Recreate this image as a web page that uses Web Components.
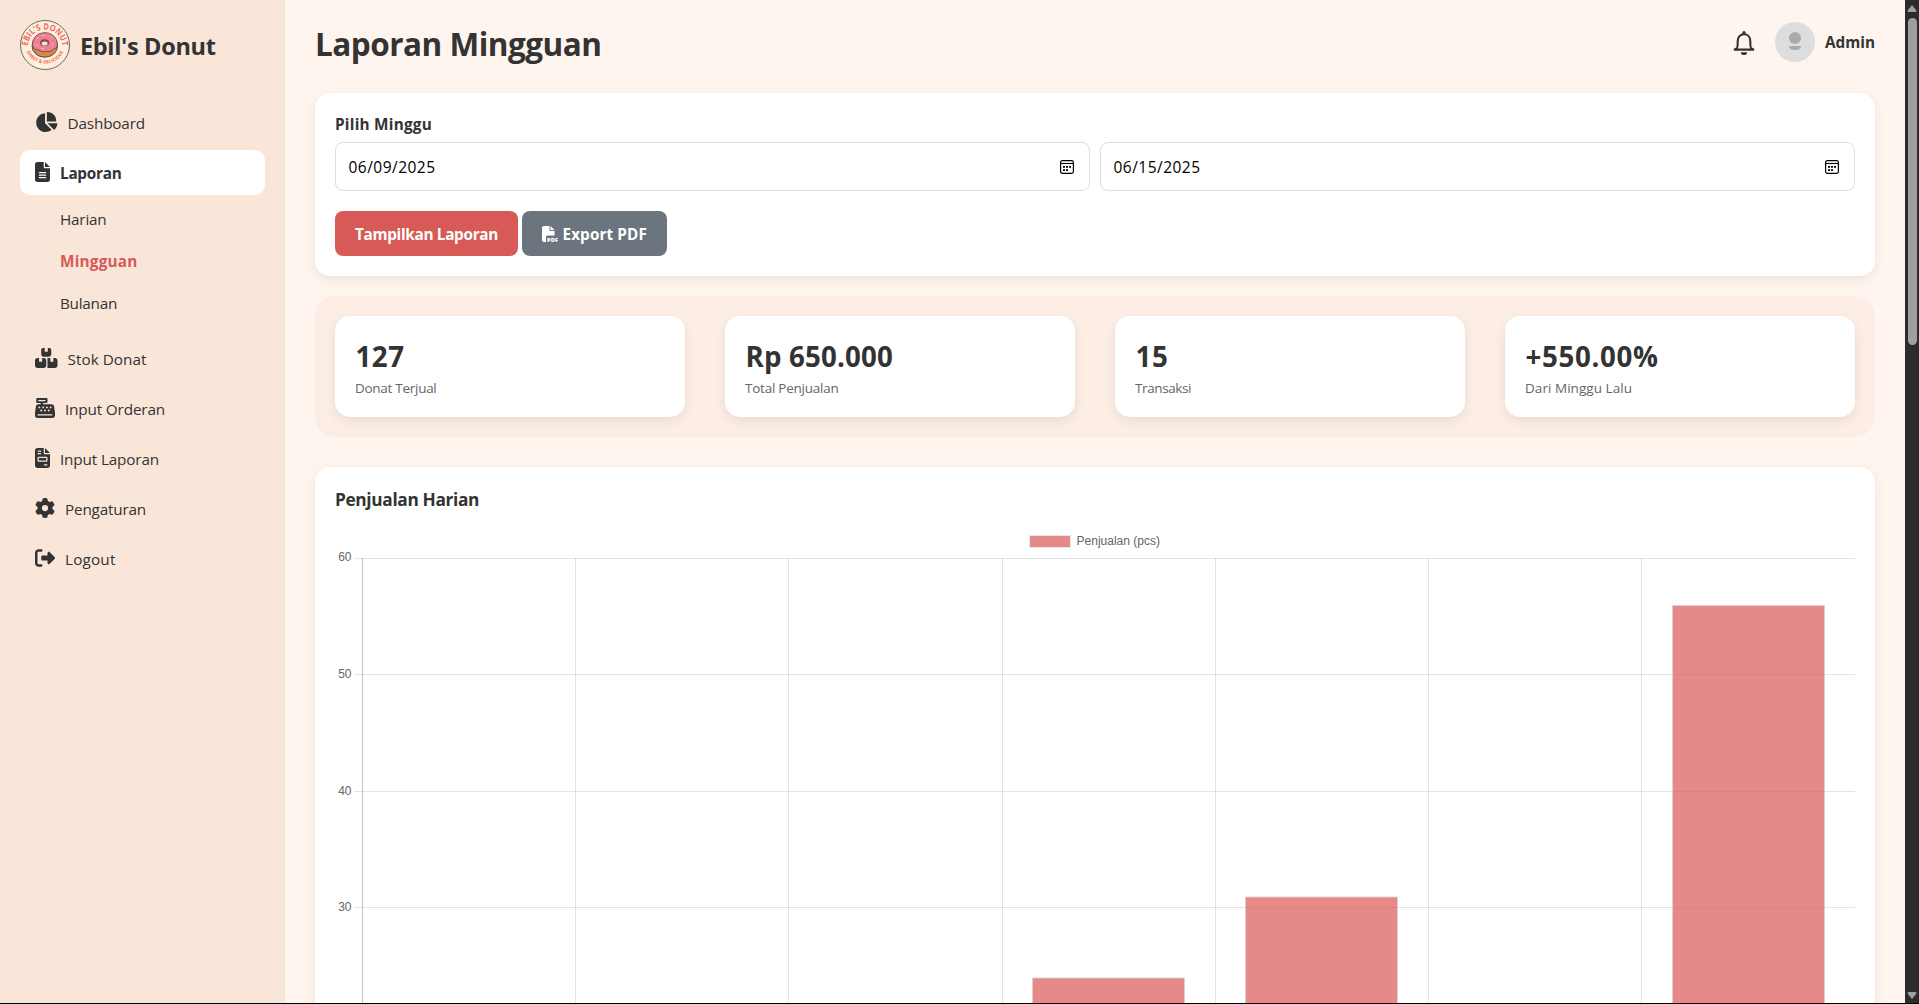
<!DOCTYPE html>
<html lang="id">
<head>
<meta charset="utf-8">
<title>Laporan Mingguan - Ebil's Donut</title>
<style>
html,body{margin:0;height:100%;overflow:hidden;background:#fff5ef}
body{font-family:"Open Sans","Noto Sans",sans-serif;color:#333}
</style>
</head>
<body>
<donut-app></donut-app>
<script>
const define = (name, html, init) => customElements.define(name, class extends HTMLElement {
  constructor() {
    super();
    this.attachShadow({ mode: 'open' }).innerHTML = typeof html === 'function' ? '' : html;
  }
  connectedCallback() {
    if (typeof html === 'function') this.shadowRoot.innerHTML = html(this);
    if (init) init(this);
  }
});

const ICONS = {
  pie: [576, 'M304 240V16.6c0-9 7-16.6 16-16.6C443.7 0 544 100.3 544 224c0 9-7.6 16-16.6 16H304zM32 272C32 150.7 122.1 50.3 239 34.3c9.2-1.3 17 6.1 17 15.4V288L412.5 444.5c6.7 6.7 6.2 17.7-1.5 23.1C371.8 495.6 323.8 512 272 512C139.5 512 32 404.6 32 272zm526.4 16c9.3 0 16.6 7.8 15.4 17c-7.7 55.9-34.6 105.6-73.9 142.3c-6 5.6-15.4 5.2-21.2-.7L320 288H558.4z'],
  file: [384, 'M64 0C28.7 0 0 28.7 0 64V448c0 35.3 28.7 64 64 64H320c35.3 0 64-28.7 64-64V160H256c-17.7 0-32-14.3-32-32V0H64zM256 0V128H384L256 0zM112 256H272c8.8 0 16 7.2 16 16s-7.2 16-16 16H112c-8.8 0-16-7.2-16-16s7.2-16 16-16zm0 64H272c8.8 0 16 7.2 16 16s-7.2 16-16 16H112c-8.8 0-16-7.2-16-16s7.2-16 16-16zm0 64H272c8.8 0 16 7.2 16 16s-7.2 16-16 16H112c-8.8 0-16-7.2-16-16s7.2-16 16-16z'],
  boxes: [576, 'M248 0H208c-26.5 0-48 21.5-48 48V160c0 35.3 28.7 64 64 64H352c35.3 0 64-28.7 64-64V48c0-26.5-21.5-48-48-48H328V80c0 8.8-7.2 16-16 16H264c-8.8 0-16-7.2-16-16V0zM64 256c-35.3 0-64 28.7-64 64V448c0 35.3 28.7 64 64 64H224c35.3 0 64-28.7 64-64V320c0-35.3-28.7-64-64-64H184v80c0 8.8-7.2 16-16 16H120c-8.8 0-16-7.2-16-16V256H64zM352 512H512c35.3 0 64-28.7 64-64V320c0-35.3-28.7-64-64-64H472v80c0 8.8-7.2 16-16 16H408c-8.8 0-16-7.2-16-16V256H352c-15 0-28.8 5.1-39.7 13.8c4.9 10.4 7.7 22 7.7 34.2V464c0 12.2-2.8 23.8-7.7 34.2C323.2 506.9 337 512 352 512z'],
  register: [512, 'M64 0C46.3 0 32 14.3 32 32V96c0 17.7 14.3 32 32 32h80v32H87c-31.6 0-58.5 23.1-63.3 54.4L1.1 364.1C.4 368.8 0 373.6 0 378.4V448c0 35.3 28.7 64 64 64H448c35.3 0 64-28.7 64-64V378.4c0-4.8-.4-9.6-1.1-14.4L488.2 214.4C483.5 183.1 456.6 160 425 160H208V128h80c17.7 0 32-14.3 32-32V32c0-17.7-14.3-32-32-32H64zM96 48H256c8.8 0 16 7.2 16 16s-7.2 16-16 16H96c-8.8 0-16-7.2-16-16s7.2-16 16-16zM64 432c0-8.8 7.2-16 16-16H432c8.8 0 16 7.2 16 16s-7.2 16-16 16H80c-8.8 0-16-7.2-16-16zm48-168a24 24 0 1 1 0-48 24 24 0 1 1 0 48zm120-24a24 24 0 1 1 -48 0 24 24 0 1 1 48 0zM160 344a24 24 0 1 1 0-48 24 24 0 1 1 0 48zM328 240a24 24 0 1 1 -48 0 24 24 0 1 1 48 0zM256 344a24 24 0 1 1 0-48 24 24 0 1 1 0 48zM424 240a24 24 0 1 1 -48 0 24 24 0 1 1 48 0zM352 344a24 24 0 1 1 0-48 24 24 0 1 1 0 48z'],
  invoice: [384, 'M64 0C28.7 0 0 28.7 0 64V448c0 35.3 28.7 64 64 64H320c35.3 0 64-28.7 64-64V160H256c-17.7 0-32-14.3-32-32V0H64zM256 0V128H384L256 0zM80 64h64c8.8 0 16 7.2 16 16s-7.2 16-16 16H80c-8.8 0-16-7.2-16-16s7.2-16 16-16zm0 64h64c8.8 0 16 7.2 16 16s-7.2 16-16 16H80c-8.8 0-16-7.2-16-16s7.2-16 16-16zm16 96H288c17.7 0 32 14.3 32 32v64c0 17.7-14.3 32-32 32H96c-17.7 0-32-14.3-32-32V256c0-17.7 14.3-32 32-32zm0 32v64H288V256H96zM240 416h64c8.8 0 16 7.2 16 16s-7.2 16-16 16H240c-8.8 0-16-7.2-16-16s7.2-16 16-16z'],
  gear: [512, 'M495.9 166.6c3.2 8.7 .5 18.4-6.4 24.6l-43.3 39.4c1.1 8.3 1.7 16.8 1.7 25.4s-.6 17.1-1.7 25.4l43.3 39.4c6.9 6.2 9.6 15.9 6.4 24.6c-4.4 11.9-9.7 23.3-15.8 34.3l-4.7 8.1c-6.6 11-14 21.4-22.1 31.2c-5.9 7.2-15.7 9.6-24.5 6.8l-55.7-17.7c-13.4 10.3-28.2 18.9-44 25.4l-12.5 57.1c-2 9.1-9 16.3-18.2 17.8c-13.8 2.3-28 3.5-42.5 3.5s-28.7-1.2-42.5-3.5c-9.2-1.5-16.2-8.7-18.2-17.8l-12.5-57.1c-15.8-6.5-30.6-15.1-44-25.4L83.1 425.9c-8.8 2.8-18.6 .3-24.5-6.8c-8.1-9.8-15.5-20.2-22.1-31.2l-4.7-8.1c-6.1-11-11.4-22.4-15.8-34.3c-3.2-8.7-.5-18.4 6.4-24.6l43.3-39.4C64.6 273.1 64 264.6 64 256s.6-17.1 1.7-25.4L22.4 191.2c-6.9-6.2-9.6-15.9-6.4-24.6c4.4-11.9 9.7-23.3 15.8-34.3l4.7-8.1c6.6-11 14-21.4 22.1-31.2c5.9-7.2 15.7-9.6 24.5-6.8l55.7 17.7c13.4-10.3 28.2-18.9 44-25.4l12.5-57.1c2-9.1 9-16.3 18.2-17.8C227.3 1.2 241.5 0 256 0s28.7 1.2 42.5 3.5c9.2 1.5 16.2 8.7 18.2 17.8l12.5 57.1c15.8 6.5 30.6 15.1 44 25.4l55.7-17.7c8.8-2.8 18.6-.3 24.5 6.8c8.1 9.8 15.5 20.2 22.1 31.2l4.7 8.1c6.1 11 11.4 22.4 15.8 34.3zM256 336a80 80 0 1 0 0-160 80 80 0 1 0 0 160z'],
  logout: [512, 'M377.9 105.9L500.7 228.7c7.2 7.2 11.3 17.1 11.3 27.3s-4.1 20.1-11.3 27.3L377.9 406.1c-6.4 6.4-15 9.9-24 9.9c-18.7 0-33.9-15.2-33.9-33.9l0-62.1-128 0c-17.7 0-32-14.3-32-32l0-64c0-17.7 14.3-32 32-32l128 0 0-62.1c0-18.7 15.2-33.9 33.9-33.9c9 0 17.6 3.6 24 9.9zM160 96L96 96c-17.7 0-32 14.3-32 32l0 256c0 17.7 14.3 32 32 32l64 0c17.7 0 32 14.3 32 32s-14.3 32-32 32l-64 0c-53 0-96-43-96-96L0 128C0 75 43 32 96 32l64 0c17.7 0 32 14.3 32 32s-14.3 32-32 32z']
};

/* Application shell: sidebar, scrolling page, scroll bar */
define('donut-app', `
<style>
:host{display:grid;grid-template-columns:285px 1fr 14px;height:1003px;border-bottom:1px solid #000;overflow:hidden}
main{display:flex;flex-direction:column;padding:18px 30px 0;min-height:0;overflow:hidden}
.gap{margin-bottom:20px}
</style>
<side-bar></side-bar>
<main>
  <page-head></page-head>
  <week-filter class="gap"></week-filter>
  <stat-panel>
    <stat-card value="127" label="Donat Terjual" vw="49" lw="81.5"></stat-card>
    <stat-card value="Rp 650.000" label="Total Penjualan" vw="147.5" lw="93.5"></stat-card>
    <stat-card value="15" label="Transaksi" vw="33" lw="56"></stat-card>
    <stat-card value="+550.00%" label="Dari Minggu Lalu" vw="133" lw="107"></stat-card>
  </stat-panel>
  <sales-chart></sales-chart>
</main>
<scroll-bar></scroll-bar>`);

define('donut-logo', `
<style>:host{display:block;width:50px;height:50px}svg{display:block}text{font-family:"Open Sans",sans-serif;font-weight:700;fill:#f2675f}</style>
<svg width="50" height="50" viewBox="0 0 50 50">
  <circle cx="25" cy="25" r="24.5" fill="#fdf1dd" stroke="#6e6762" stroke-width="1"/>
  <defs><path id="up" d="M8.600 31A17 17 0 1 1 41.400 31"/><path id="dn" d="M4.500 23A20.500 20.500 0 0 0 45.500 23"/></defs>
  <text font-size="8.800"><textPath href="#up" startOffset="50%" text-anchor="middle" textLength="52" lengthAdjust="spacingAndGlyphs">EBIL'S DONUT</textPath></text>
  <text font-size="4.600"><textPath href="#dn" startOffset="50%" text-anchor="middle" textLength="46">SWEET &amp; DELICIOUS</textPath></text>
  <ellipse cx="24.8" cy="26.2" rx="12.7" ry="11" fill="#d98a3f" stroke="#5f434c" stroke-width="1"/>
  <path d="M12.4 24.3C12.4 17.600 17.800 12.700 24.800 12.700S37.300 17.600 37.300 24.300C37.300 27 35.600 29 33.500 29.300C31.500 31.600 28.500 31.800 26.300 31.300C23.700 32.600 20.500 31.600 18.700 29.800C15.200 30.200 12.600 27.500 12.400 24.300Z" fill="#ef7f93" stroke="#6b4650" stroke-width=".9"/>
  <ellipse cx="24.6" cy="22.700" rx="4.600" ry="3.400" fill="#8a4a52"/>
  <ellipse cx="24.6" cy="23.400" rx="3" ry="2" fill="#f5e2cf"/>
  <g stroke="#fbd3d8" stroke-width="1" stroke-linecap="round"><path d="M17.500 18.500l.6-.5M30.500 17l.7.500M16.500 25l.5.600M32.500 24.500l.6-.5M22 28.500h.800M23 15.500h.700"/></g>
</svg>`);

define('fa-icon', el => {
  const [w, d] = ICONS[el.getAttribute('name')];
  return `<style>:host{display:block;flex:none}svg{display:block}</style>
  <svg width="${w / 25.6}" height="20" viewBox="0 0 ${w} 512"><path fill="currentColor" d="${d}"/></svg>`;
});

define('nav-item', el => `
<style>
:host{display:flex;align-items:center;gap:10px;height:45px;padding:0 15px;border-radius:10px;font-size:15.3px;line-height:21px;margin-bottom:5px}
:host([active]){background:#fff;font-weight:700;font-size:15.3px}
fa-icon{margin-bottom:1px}
fit-text{margin-top:1.500px}
</style>
<fa-icon name="${el.getAttribute('icon')}"></fa-icon><fit-text w="${el.getAttribute('w')}">${el.textContent}</fit-text>`);

define('sub-menu', `
<style>
:host{display:flex;flex-direction:column;margin:-2px 0 12px;padding-left:40px;font-size:15.3px}
div{height:42px;display:flex;align-items:center}
b{color:#d75a56;font-weight:700;font-size:15.3px}
</style>
<div><fit-text w="46.500">Harian</fit-text></div>
<div><b><fit-text w="77.500">Mingguan</fit-text></b></div>
<div><fit-text w="57">Bulanan</fit-text></div>`);

define('side-bar', `
<style>
:host{display:flex;flex-direction:column;background:#fae6d9;padding:20px 20px 0}
header{display:flex;align-items:center;gap:10px;height:50px;margin-bottom:30px;font-size:23.500px;font-weight:700}
fit-text{margin-top:2px}
nav{display:flex;flex-direction:column}
</style>
<header><donut-logo></donut-logo><fit-text w="135.500">Ebil's Donut</fit-text></header>
<nav>
  <nav-item icon="pie" w="77.500">Dashboard</nav-item>
  <nav-item icon="file" w="61.500" active>Laporan</nav-item>
  <sub-menu></sub-menu>
  <nav-item icon="boxes" w="79">Stok Donat</nav-item>
  <nav-item icon="register" w="100">Input Orderan</nav-item>
  <nav-item icon="invoice" w="99">Input Laporan</nav-item>
  <nav-item icon="gear" w="81">Pengaturan</nav-item>
  <nav-item icon="logout" w="50.500">Logout</nav-item>
</nav>`);

define('page-head', `
<style>
:host{display:flex;flex:none;justify-content:space-between;height:75px;align-items:flex-start}
h1{margin:4px 0 0;font-size:31.500px;line-height:43px;font-weight:700;display:flex;height:43px}
.user{display:flex;align-items:center;height:48px}
svg{display:block}
.bell{margin:1px 20px 0 0}
.avatar{margin:0 10px 0 0}
b{font-size:15.300px;font-weight:700}
</style>
<h1><fit-text w="286.500">Laporan Mingguan</fit-text></h1>
<div class="user">
  <svg class="bell" width="22" height="26" viewBox="0 0 22 26"><path d="M4.200 19.700C4.600 17.600 4.700 14.500 4.700 11.200C4.700 7.100 7.300 4.200 11 4.200S17.300 7.100 17.300 11.200C17.300 14.500 17.400 17.600 17.800 19.700" fill="none" stroke="#333" stroke-width="2.100"/><path d="M.8 18.800L3.500 17.200H18.500L21.200 18.800V20.700H.8ZM9.400 4.500V2.500A1.600 1.600 0 0 1 12.600 2.500V4.500ZM7.900 22.200H14.100A3.100 2.800 0 0 1 7.900 22.200Z" fill="#333"/><path d="M5.300 16.500H16.700L17 18.600H5Z" fill="#fff5ef"/></svg>
  <svg class="avatar" width="40" height="40" viewBox="0 0 40 40"><circle cx="20" cy="20" r="20" fill="#ddd"/><circle cx="20" cy="16" r="6" fill="#aaa"/><path d="M14 24H26C26 26.500 23.500 28 20 28S14 26.500 14 24Z" fill="#aaa"/></svg>
  <b><fit-text w="50">Admin</fit-text></b>
</div>`);

define('date-field', el => `
<style>
:host{display:flex;flex:1;align-items:center;justify-content:space-between;box-sizing:border-box;height:49px;border:1px solid #ddd;border-radius:8px;padding:0 15px 0 12.500px;font-size:15.500px;color:#000;background:#fff}
svg{display:block}
</style>
<fit-text w="87">${el.getAttribute('value')}</fit-text>
<svg width="14" height="14" viewBox="0 0 14 14"><rect x=".6" y=".6" width="12.800" height="12.800" rx="1.800" fill="none" stroke="#000" stroke-width="1.200"/><path d="M.6 3.500H13.400" stroke="#000" stroke-width="1.100"/><path d="M3 6h2v1.700H3zM6 6h2v1.700H6zM9 6h2v1.700H9zM3 9.200h2v1.700H3zM6 9.200h2v1.700H6z"/></svg>`);

define('action-button', `
<style>
:host{display:flex;align-items:center;box-sizing:border-box;height:45px;padding:0 20px;border-radius:8px;background:#d75a56;color:#fff;font-size:15.300px;font-weight:700;gap:4.500px}
:host([kind=grey]){background:#6c757d}
</style>
<slot name="icon"></slot><slot></slot>`);

define('week-filter', `
<style>
:host{display:flex;flex-direction:column;box-sizing:border-box;height:183px;flex:none;padding:20px;background:#fff;border-radius:15px;box-shadow:0 3px 12px rgba(0,0,0,.08)}
.label{font-size:15.300px;font-weight:700;line-height:23px;height:29px}
.row{display:flex;gap:10px;margin-bottom:20px}
.btns{display:flex;gap:4px}
svg{display:block}
svg text{font:800 5.500px "Open Sans",sans-serif;fill:#fff}
</style>
<div class="label"><fit-text w="97">Pilih Minggu</fit-text></div>
<div class="row"><date-field value="06/09/2025"></date-field><date-field value="06/15/2025"></date-field></div>
<div class="btns">
  <action-button><fit-text w="143">Tampilkan Laporan</fit-text></action-button>
  <action-button kind="grey"><svg slot="icon" width="16" height="16" viewBox="0 0 16 16"><path fill="#fff" d="M0 2C0 .9.900 0 2 0H7.500V4C7.500 4.600 7.900 5 8.500 5H12.500V9.500H5.500C4.400 9.500 4 10.400 4 11.500V16H2C.9 16 0 15.100 0 14ZM12.500 4H8.500V0Z"/><text x="5" y="15.500" textLength="11" lengthAdjust="spacingAndGlyphs">PDF</text></svg><fit-text w="84.500">Export PDF</fit-text></action-button>
</div>`);

define('stat-panel', `
<style>
:host{display:grid;grid-template-columns:repeat(4,1fr);gap:40px;flex:none;box-sizing:border-box;height:141px;padding:20px;background:#fceee5;border-radius:20px;margin-bottom:30px}
</style><slot></slot>`);

define('stat-card', el => `
<style>
:host{display:flex;flex-direction:column;background:#fff;border-radius:15px;padding:20px;box-shadow:0 4px 12px rgba(0,0,0,.08);box-sizing:border-box;height:101px}
.v{font-size:27.700px;font-weight:700;line-height:40px;height:40px;padding-left:.500px}
.l{font-size:13.500px;line-height:24px;color:#666}
</style>
<div class="v"><fit-text w="${el.getAttribute('vw')}">${el.getAttribute('value')}</fit-text></div>
<div class="l"><fit-text w="${el.getAttribute('lw')}">${el.getAttribute('label')}</fit-text></div>`);

/* Bar chart: y scale is 11.64px per unit, the top grid line is 60 */
define('sales-chart', () => {
  const xs = [27.5, 240.5, 453.5, 667.5, 880.5, 1093.5, 1306.5], ys = [30.5, 146.5, 263.5, 379.5];
  const bars = [[698, 450], [911, 369], [1338, 77.500]];
  return `
<style>
:host{display:flex;flex-direction:column;flex:none;box-sizing:border-box;height:900px;padding:20px;background:#fff;border-radius:15px;box-shadow:0 3px 12px rgba(0,0,0,.08)}
h2{margin:0 0 15px;font-size:17.300px;line-height:26px;height:26px;font-weight:700}
svg{display:block}
text{font:12px "Liberation Sans",Arial,sans-serif;fill:#666}
</style>
<h2><fit-text w="144">Penjualan Harian</fit-text></h2>
<svg width="1520" height="760" viewBox="0 0 1520 760">
  ${xs.map((x, i) => `<path d="M${x} 30V760" stroke="#000" stroke-opacity="${i ? .11 : .22}"/>`).join('')}
  ${ys.map((y, i) => `<path d="M19.500 ${y}H1520" stroke="#000" stroke-opacity=".11"/><text x="16.500" y="${y + 2.700 + (i ? .5 : 0)}" text-anchor="end">${60 - i * 10}</text>`).join('')}
  ${bars.map(([x, y]) => `<rect x="${x - .5}" y="${y}" width="152" height="760" fill="#d9534f" fill-opacity=".68"/><path d="M${x - .5} 760V${y}H${x + 151.500}V760" fill="none" stroke="#dcd0d0"/>`).join('')}
  <rect x="694.500" y="7.500" width="41" height="12" fill="#e48b87" stroke="#ece4e4"/>
  <text x="741.500" y="17" textLength="83.500">Penjualan (pcs)</text>
</svg>`;
});

define('scroll-bar', `
<style>
:host{display:flex;flex-direction:column;align-items:center;background:#2c2c2c;padding:5px 0 4px;box-sizing:border-box}
svg{display:block;flex:none}
i{display:block;width:9px;height:327px;border-radius:4.500px;background:#9f9f9f;margin:6px 0 auto;flex:none}
</style>
<svg width="10" height="7"><path d="M5 0L9.500 5.500Q9.500 7 8.500 7H1.500Q.5 7 .5 5.500Z" fill="#9f9f9f"/></svg>
<i></i>
<svg width="10" height="7"><path d="M5 7L9.500 1.500Q9.500 0 8.500 0H1.500Q.5 0 .5 1.500Z" fill="#9f9f9f"/></svg>`);

/* Text run tracked so that its advance equals the "w" attribute; registered last, once its ancestors are laid out */
define('fit-text', '<style>:host{display:inline-block;white-space:nowrap}</style><slot></slot>', el => {
  const n = el.textContent.length, w = el.getBoundingClientRect().width;
  el.style.letterSpacing = ((+el.getAttribute('w') - w) / n).toFixed(3) + 'px';
});
</script>
</body>
</html>
